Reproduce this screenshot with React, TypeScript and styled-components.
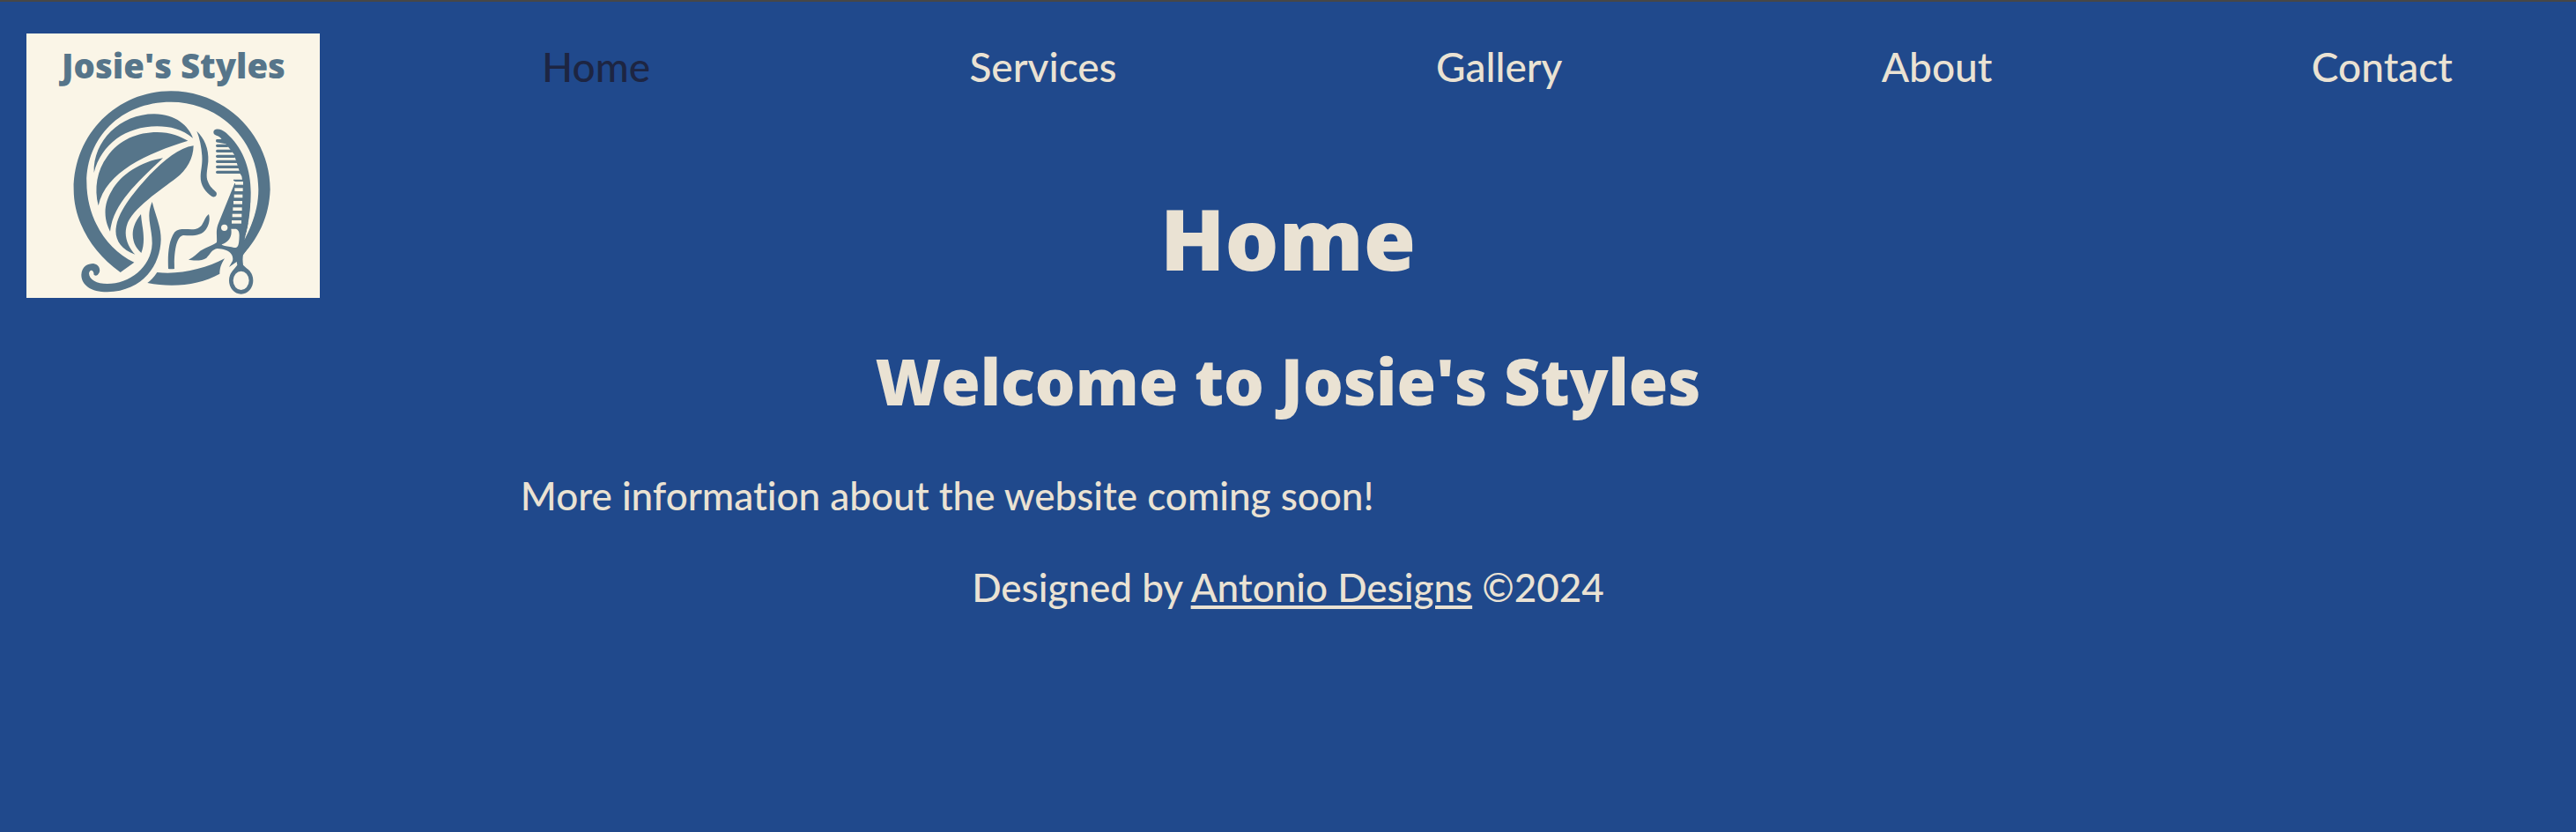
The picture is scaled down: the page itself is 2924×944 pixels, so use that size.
import React from "react";
import styled, { createGlobalStyle } from "styled-components";

const colors = {
  page: "#20498c",
  cream: "#eae2d3",
  current: "#1d2542",
  topLine: "#474747",
  logoPaper: "#faf5e7",
  logoInk: "#56758a",
};

const GlobalStyle = createGlobalStyle`
  * { box-sizing: border-box; }
  body {
    margin: 0;
    background: ${colors.page};
    color: ${colors.cream};
    font-family: Lato, "Gill Sans", sans-serif;
    font-size: 44px;
    font-weight: 500;
    font-variant-ligatures: none;
    line-height: 56px;
  }
`;

const Page = styled.div`
  border-top: 2px solid ${colors.topLine};
`;

const Header = styled.header`
  display: flex;
  align-items: flex-start;
  padding: 36px 140px 0 30px;
  height: 186px;
`;

const LogoLink = styled.a`
  flex: none;
  display: block;
  width: 333px;
  height: 300px;
`;

const Nav = styled.nav`
  flex: 1;
  margin-left: 252px;
  padding-top: 10px;
  font-size: 46px;
`;

const NavList = styled.ul`
  display: flex;
  justify-content: space-between;
  list-style: none;
  margin: 0;
  padding: 0;
`;

const NavLink = styled.a<{ $current?: boolean }>`
  color: ${(p) => (p.$current ? colors.current : colors.cream)};
  text-decoration: none;
`;

const Main = styled.main`
  width: 60%;
  margin: 0 auto;
`;

const Title = styled.h1`
  margin: 26px 0 64px;
  font-family: "Open Sans", sans-serif;
  font-size: 96px;
  font-weight: 800;
  line-height: 112px;
  text-align: center;
`;

const Subtitle = styled.h2`
  margin: 0 0 60px;
  font-family: "Open Sans", sans-serif;
  font-size: 72px;
  font-weight: 800;
  line-height: 84px;
  text-align: center;
`;

const Paragraph = styled.p`
  margin: 0;
  padding-left: 6px;
`;

const Footer = styled.footer`
  margin-top: 48px;
  text-align: center;
`;

const FooterLink = styled.a`
  color: inherit;
  text-decoration-thickness: 4px;
  text-underline-offset: 4px;
`;

const LogoArt = styled.svg`
  display: block;
  width: 100%;
  height: 100%;
`;

const LogoName = styled.text`
  font-family: "Open Sans", sans-serif;
  font-size: 115px;
  font-weight: 800;
`;

const upperTeeth = [
  [479, 764],
  [496, 774],
  [514, 788],
  [532, 798],
  [550, 806],
  [568, 814],
  [586, 820],
];

const lowerGaps = [618, 640, 662, 684, 706, 728, 750];

function Logo() {
  return (
    <LogoArt viewBox="90 114 999 900" role="img" aria-label="Josie's Styles">
      <rect x="90" y="114" width="999" height="900" fill={colors.logoPaper} />
      <g fill={colors.logoInk}>
        <LogoName x="591" y="266" textAnchor="middle">
          Josie's Styles
        </LogoName>
        {/* ring */}
        <path d="M410 927C312 858 251 752 251 645C251 455 400 310 582 310C772 310 920 465 920 645C917 735 882 806 828 866L812 850L833 815C865 752 880 700 880 645C880 480 750 347 582 347C410 347 295 470 295 620C295 740 362 850 457 893Z" />
        {/* hair */}
        <path d="M320 588C316 480 410 388 525 388C600 388 642 430 657 470C620 440 580 430 535 430C430 430 345 490 320 588Z" />
        <path d="M335 700C320 640 330 580 365 533C405 475 470 450 535 450C580 450 615 465 640 479C500 522 360 585 335 700Z" />
        <path d="M375 788C350 740 355 690 380 650C410 595 480 550 555 538C480 610 385 690 375 788Z" />
        <path d="M460 866C408 848 388 810 396 770C405 715 460 650 510 595C560 545 610 502 659 496C658 540 636 580 600 606C550 645 440 715 430 775C422 810 440 845 460 866Z" />
        <path d="M480 729C455 760 447 790 455 820C460 840 472 852 481 861C492 835 490 800 485 770Q481 745 480 729Z" />
        <path d="M518 687C530 735 548 770 548 815C546 900 490 990 365 994C310 994 277 970 277 935C279 907 298 897 318 897C336 900 343 915 338 928C332 941 322 940 319 934C322 925 308 910 303 930C303 952 330 966 365 966C440 966 515 910 518 830C519 775 495 740 518 687Z" />
        {/* face */}
        <path d="M670 446C695 470 712 505 709 550C706 580 700 600 708 618C715 638 728 645 736 654C742 664 732 674 722 669C700 655 682 630 683 600C684 575 690 560 688 530C686 500 680 470 670 446Z" />
        <path d="M573 915C571 870 573 820 595 790C612 774 640 783 665 780C697 772 690 745 711 729C716 745 712 765 702 780C685 803 660 803 625 801C600 803 592 860 594 915Q584 917 573 915Z" />
        <path d="M535 927C610 936 700 915 765 880C752 900 748 915 748 932C680 970 590 980 502 963Q520 950 535 927Z" />
        {/* comb */}
        <path d="M737 461C724 458 724 443 735 440C750 436 765 447 780 462C830 510 854 580 854 655C854 720 845 770 833 812L815 830L826 770L828 630L795 615L795 611L825 611Q824 598 818 592L797 525L769 490L737 484V475H755Q750 464 737 461Z" />
        {/* scissors */}
        <path d="M799 624L742 765C734 790 740 805 738 825C722 838 695 842 675 860C660 873 650 880 642 884C660 888 690 888 703 878C715 866 722 848 740 846C770 847 798 860 792 888L780 909L806 891L808 902L790 925H852L828 902Q825 880 828 868L860 820L833 815L845 760L828 760V624Z" />
      </g>
      <g stroke={colors.logoInk} strokeWidth="10" strokeLinecap="round">
        {upperTeeth.map(([y, end]) => (
          <line key={y} x1="740" x2={end} y1={y} y2={y} />
        ))}
      </g>
      <g fill={colors.logoPaper}>
        {lowerGaps.map((y, i) => (
          <rect key={y} x={801 - i * 2} y={y} width={27 + i} height="11" />
        ))}
        <circle cx="764" cy="775" r="11" />
        <path d="M787 779H804Q815 783 815 800C814 832 812 845 797 843C780 838 755 838 755 832C775 824 792 810 787 779Z" />
        <path d="M854 690Q852 755 833 812Q866 750 875 690Z" />
      </g>
      <ellipse
        cx="821"
        cy="955"
        rx="34"
        ry="39"
        fill={colors.logoPaper}
        stroke={colors.logoInk}
        strokeWidth="14"
      />
    </LogoArt>
  );
}

const links = ["Home", "Services", "Gallery", "About", "Contact"];

export default function App() {
  return (
    <Page>
      <GlobalStyle />
      <Header>
        <LogoLink href="#home">
          <Logo />
        </LogoLink>
        <Nav>
          <NavList>
            {links.map((name, i) => (
              <li key={name}>
                <NavLink
                  href={`#${name.toLowerCase()}`}
                  $current={i === 0}
                  aria-current={i === 0 ? "page" : undefined}
                >
                  {name}
                </NavLink>
              </li>
            ))}
          </NavList>
        </Nav>
      </Header>
      <Main>
        <Title>Home</Title>
        <Subtitle>Welcome to Josie's Styles</Subtitle>
        <Paragraph>More information about the website coming soon!</Paragraph>
      </Main>
      <Footer>
        Designed by <FooterLink href="#antonio-designs">Antonio Designs</FooterLink> ©2024
      </Footer>
    </Page>
  );
}
